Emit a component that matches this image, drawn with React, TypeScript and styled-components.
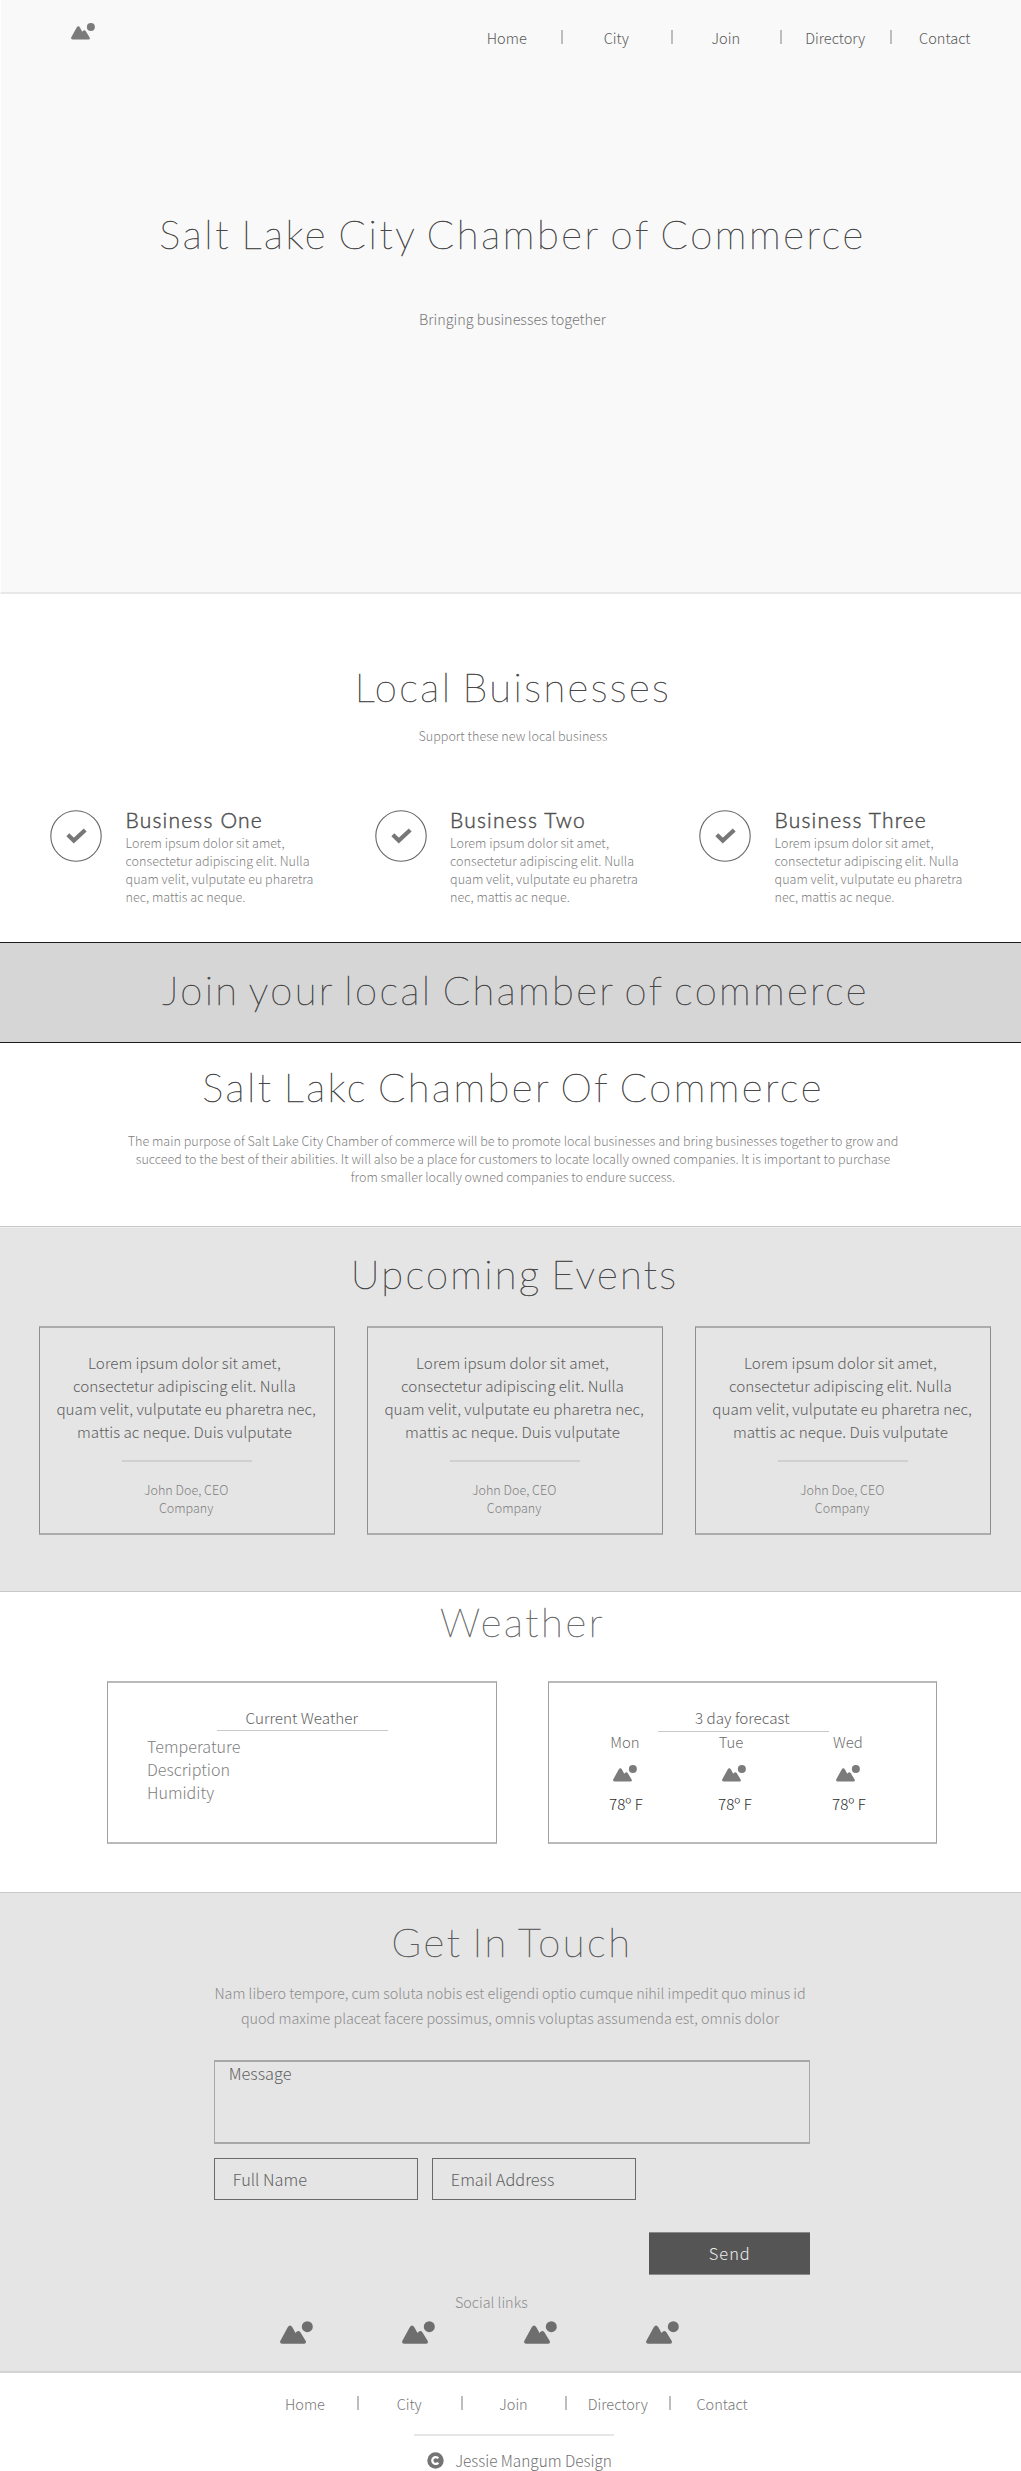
import React from "react";
import styled, { createGlobalStyle } from "styled-components";

const GlobalStyle = createGlobalStyle`
  *, *::before, *::after { box-sizing: border-box; }
  body {
    margin: 0;
    background: #fff;
    color: #666;
    font-family: "Noto Sans CJK JP", "Noto Sans", sans-serif;
    font-weight: 300;
  }
  p, h1, h2, h3 { margin: 0; font-weight: 300; }
`;

const Heading = styled.h2<{ $spacing?: number; $color?: string }>`
  font: 100 40px/50px Lato, sans-serif;
  height: 48px;
  letter-spacing: ${p => p.$spacing ?? 2.65}px;
  word-spacing: -3.7px;
  color: ${p => p.$color ?? "#484848"};
  -webkit-text-stroke: 0.55px ${p => p.$color ?? "#484848"};
  text-align: center;
  white-space: nowrap;
`;

const Small = styled.p`
  font-size: 12.57px;
  line-height: 18px;
  color: #808080;
  white-space: pre;
`;

/* Navigation */
const Nav = styled.nav<{ $item: number; $color: string }>`
  display: flex;
  align-items: flex-start;
  color: ${p => p.$color};
  font-size: 14.55px;
  line-height: 22px;
  a { width: ${p => p.$item}px; padding-right: 1px; text-align: center; }
`;
const Separator = styled.i`
  width: 2px;
  height: 14px;
  margin-top: 3px;
  background: #bdbdbd;
`;

/* Hero */
const Hero = styled.header`
  height: 594px;
  padding-left: 3px;
  border-left: 1px solid #fff;
  border-bottom: 2px solid #e8e8e8;
  background: #f9f9f9;
  text-align: center;
`;
const TopBar = styled.div`
  display: flex;
  justify-content: space-between;
  height: 209px;
  padding: 23px 22px 0 67px;
  nav { margin-top: 4px; }
`;
const Tagline = styled.p`
  margin-top: 52px;
  font-size: 14.4px;
  line-height: 20px;
  color: #777;
`;

/* Local businesses */
const Local = styled.section`
  height: 348px;
  padding: 68px 0 0 5px;
  text-align: center;
  > p { margin-top: 17px; }
`;
const BusinessRow = styled.div`
  display: flex;
  margin-top: 63px;
  padding-left: 45px;
  text-align: left;
`;
const Business = styled.article`
  display: flex;
  flex: 0 0 324.5px;
  gap: 23.6px;
  > svg { margin-top: 2px; }
`;
const BusinessName = styled.h3`
  margin-bottom: 2px;
  font: 300 21px/24px Lato, sans-serif;
  letter-spacing: 1.18px;
  color: #505050;
  -webkit-text-stroke: 0.45px #505050;
`;

const Banner = styled.section`
  height: 101px;
  padding: 22px 0 0 10px;
  border: solid #1c1c1c;
  border-width: 1px 0;
  background: #d6d6d6;
`;

const About = styled.section`
  height: 183px;
  padding: 19px 0 0 5px;
  text-align: center;
  p { margin-top: 22px; }
`;

/* Events */
const Events = styled.section`
  height: 366px;
  padding: 22px 0 0 39px;
  border: solid #c9c9c9;
  border-width: 1px 0;
  background: #e5e5e5;
  box-shadow: inset 0 1px #efefef;
  h2 { width: 951px; }
`;
const EventRow = styled.div`
  display: flex;
  gap: 31.7px;
  margin-top: 29px;
`;
const EventCard = styled.article`
  display: flex;
  flex: 0 0 296.3px;
  flex-direction: column;
  align-items: center;
  height: 209px;
  padding-top: 23px;
  border: solid #acacac;
  border-width: 2px 1px;
  border-left-color: #8e8e8e;
  border-right-color: #8e8e8e;
  text-align: center;
  p { padding-right: 2px; }
`;
const EventText = styled.p`
  font-size: 15.22px;
  line-height: 23px;
  color: #5c5c5c;
  white-space: pre;
`;
const Rule = styled.hr<{ $w: number; $h?: number; $c?: string }>`
  flex: none;
  width: ${p => p.$w}px;
  height: ${p => p.$h ?? 2}px;
  margin: 0;
  border: 0;
  background: ${p => p.$c ?? "#d0d0d0"};
`;
const EventRule = styled(Rule)`margin: 17px 0 19px;`;

/* Weather */
const Weather = styled.section`
  height: 300px;
  padding: 5px 0 0 107px;
  h2 { width: 831px; }
`;
const WeatherRow = styled.div`
  display: flex;
  gap: 51px;
  margin-top: 36px;
`;
const WeatherBox = styled.article`
  display: flex;
  flex: 0 0 389.5px;
  flex-direction: column;
  align-items: center;
  height: 163px;
  padding-top: 24px;
  border: solid #bababa;
  border-width: 2px 1px;
  border-left-color: #a0a0a0;
  border-right-color: #a0a0a0;
`;
const BoxTitle = styled.h3<{ $gap: number }>`
  margin-bottom: ${p => p.$gap}px;
  font-size: 15.25px;
  line-height: 20px;
  color: #606060;
`;
const BoxRule = styled(Rule)`margin-left: 2px;`;
const Readings = styled.div`
  align-self: flex-start;
  padding: 4px 0 0 39px;
  font-size: 16.1px;
  line-height: 23px;
  color: #808080;
`;
const Forecast = styled.div`
  display: grid;
  grid-template-columns: 109px 109px 119px;
  align-self: flex-start;
  padding-left: 22px;
`;
const Day = styled.div<{ $shift: number }>`
  display: flex;
  flex-direction: column;
  align-items: center;
  svg { margin: 14px 0 11px; }
  span { padding-right: ${p => p.$shift}px; font-size: 14.9px; line-height: 20px; height: 19px; color: #6c6c6c; }
  b { font-size: 15.2px; line-height: 20px; font-weight: 300; color: #2c2c2c; padding-left: 2px; }
`;

/* Contact */
const Contact = styled.section`
  height: 481px;
  padding: 24px 0 0 213.8px;
  border-top: 1px solid #c9c9c9;
  border-bottom: 2px solid #d3d3d3;
  background: #e5e5e5;
`;
const Form = styled.form`
  display: flex;
  flex-direction: column;
  width: 596.5px;
`;
const Intro = styled.p`
  margin: 15px 0 30px;
  padding-right: 4px;
  font-size: 14.37px;
  line-height: 25px;
  color: #8c8c8c;
  text-align: center;
  white-space: nowrap;
`;
const Message = styled.div`
  height: 84px;
  padding-left: 14px;
  border: solid #a8a8a8;
  border-width: 2px 1px;
  font-size: 16.3px;
  line-height: 22px;
  color: #606060;
`;
const Fields = styled.div`
  display: flex;
  gap: 14px;
  margin-top: 14px;
`;
const Field = styled.div`
  width: 204px;
  height: 42px;
  padding-left: 18px;
  border: 1px solid #6a6a6a;
  font-size: 16.3px;
  line-height: 40px;
  color: #606060;
`;
const Send = styled.button`
  align-self: flex-end;
  width: 161px;
  height: 43px;
  margin-top: 32px;
  padding: 0;
  border: solid #8a8a8a;
  border-width: 1px 0;
  background: #555;
  color: #eee;
  font: 300 16.4px/41px "Noto Sans CJK JP", "Noto Sans", sans-serif;
  letter-spacing: 1px;
`;
const Social = styled.div`
  display: flex;
  flex-direction: column;
  align-items: center;
  width: 555px;
  margin-top: 17px;
  font-size: 14.4px;
  line-height: 20px;
  color: #8c8c8c;
`;
const SocialIcons = styled.div`
  display: flex;
  gap: 89px;
  margin-top: 9px;
  padding-right: 23px;
`;

/* Footer */
const Footer = styled.footer`
  display: flex;
  flex-direction: column;
  align-items: center;
  height: 98px;
  padding: 20px 0 0 7px;
`;
const FooterRule = styled(Rule)`margin-top: 19px;`;
const Credit = styled.div`
  display: flex;
  align-items: center;
  gap: 11px;
  margin-top: 12px;
  padding-left: 11px;
  font-size: 15.35px;
  line-height: 24px;
  color: #707070;
`;

const Mountain = ({ w = 24, color = "#7b7b7b" }: { w?: number; color?: string }) => (
  <svg width={w} height={w * 0.7} viewBox="0 0 33 23" fill={color}>
    <circle cx="27.3" cy="5.6" r="5.5" />
    <path d="M2.2 22.6Q-.8 22.6.4 19.6L7.6 6.4Q10 2.4 12.5 6.4L15.5 11.9 16.6 10.7Q18.7 8.8 20.4 11.2L25.6 19.8Q26.8 22.6 24.2 22.6Z" />
  </svg>
);

const CheckCircle = () => (
  <svg width="52" height="52" viewBox="0 0 52 52" fill="none">
    <circle cx="26" cy="26" r="25.2" stroke="#666" strokeWidth="1.1" />
    <path d="M17.8 24.8L23.8 30.6 35.2 20" stroke="#777" strokeWidth="4.2" />
  </svg>
);

const Copyright = () => (
  <svg width="17" height="17" viewBox="0 0 17 17" fill="none">
    <circle cx="8.5" cy="8.5" r="8.2" fill="#747474" />
    <path d="M11.3 6.3A3.4 3.4 0 1 0 11.3 10.7" stroke="#fff" strokeWidth="2.3" />
  </svg>
);

const pages = ["Home", "City", "Join", "Directory", "Contact"];
const Menu = ({ item, color }: { item: number; color: string }) => (
  <Nav $item={item} $color={color}>
    {pages.map((page, i) => (
      <React.Fragment key={page}>
        {i > 0 && <Separator />}
        <a>{page}</a>
      </React.Fragment>
    ))}
  </Nav>
);

export default function App() {
  return (
    <>
      <GlobalStyle />
      <Hero>
        <TopBar>
          <Mountain />
          <Menu item={107.5} color="#585858" />
        </TopBar>
        <Heading as="h1">Salt Lake City Chamber of Commerce</Heading>
        <Tagline>Bringing businesses together</Tagline>
      </Hero>

      <Local>
        <Heading $spacing={2.45}>Local Buisnesses</Heading>
        <Small>Support these new local business</Small>
        <BusinessRow>
          {["One", "Two", "Three"].map(n => (
            <Business key={n}>
              <CheckCircle />
              <div>
                <BusinessName>Business {n}</BusinessName>
                <Small>{"Lorem ipsum dolor sit amet,\nconsectetur adipiscing elit. Nulla\nquam velit, vulputate eu pharetra\nnec, mattis ac neque."}</Small>
              </div>
            </Business>
          ))}
        </BusinessRow>
      </Local>

      <Banner>
        <Heading $spacing={2.42}>Join your local Chamber of commerce</Heading>
      </Banner>

      <About>
        <Heading $spacing={2.5}>Salt Lakc Chamber Of Commerce</Heading>
        <Small>{"The main purpose of Salt Lake City Chamber of commerce will be to promote local businesses and bring businesses together to grow and\nsucceed to the best of their abilities. It will also be a place for customers to locate locally owned companies. It is important to purchase\nfrom smaller locally owned companies to endure success."}</Small>
      </About>

      <Events>
        <Heading $spacing={2.32}>Upcoming Events</Heading>
        <EventRow>
          {[0, 1, 2].map(i => (
            <EventCard key={i}>
              <EventText>{"Lorem ipsum dolor sit amet, \nconsectetur adipiscing elit. Nulla \nquam velit, vulputate eu pharetra nec,\nmattis ac neque. Duis vulputate "}</EventText>
              <EventRule $w={130} />
              <Small>{"John Doe, CEO\nCompany"}</Small>
            </EventCard>
          ))}
        </EventRow>
      </Events>

      <Weather>
        <Heading $spacing={2.6} $color="#6c6c6c">Weather</Heading>
        <WeatherRow>
          <WeatherBox>
            <BoxTitle $gap={3}>Current Weather</BoxTitle>
            <BoxRule $w={171} $h={1} $c="#c8c8c8" />
            <Readings>
              <div>Temperature</div>
              <div>Description</div>
              <div>Humidity</div>
            </Readings>
          </WeatherBox>
          <WeatherBox>
            <BoxTitle $gap={4}>3 day forecast</BoxTitle>
            <BoxRule $w={171} $h={1} $c="#c8c8c8" />
            <Forecast>
              {["Mon", "Tue", "Wed"].map(d => (
                <Day key={d} $shift={d === "Tue" ? 6 : 0}>
                  <span>{d}</span>
                  <Mountain />
                  <b>78º F</b>
                </Day>
              ))}
            </Forecast>
          </WeatherBox>
        </WeatherRow>
      </Weather>

      <Contact>
        <Form>
          <Heading $spacing={2.55} $color="#5c5c5c">Get In Touch</Heading>
          <Intro>
            Nam libero tempore, cum soluta nobis est eligendi optio cumque nihil impedit quo minus id
            <br />
            quod maxime placeat facere possimus, omnis voluptas assumenda est, omnis dolor
          </Intro>
          <Message>Message</Message>
          <Fields>
            <Field>Full Name</Field>
            <Field>Email Address</Field>
          </Fields>
          <Send type="button">Send</Send>
        </Form>
        <Social>
          Social links
          <SocialIcons>
            {[0, 1, 2, 3].map(i => <Mountain key={i} w={33} color="#6e6e6e" />)}
          </SocialIcons>
        </Social>
      </Contact>

      <Footer>
        <Menu item={102.3} color="#777" />
        <FooterRule $w={200} $c="#e6e6e6" />
        <Credit>
          <Copyright />
          Jessie Mangum Design
        </Credit>
      </Footer>
    </>
  );
}
